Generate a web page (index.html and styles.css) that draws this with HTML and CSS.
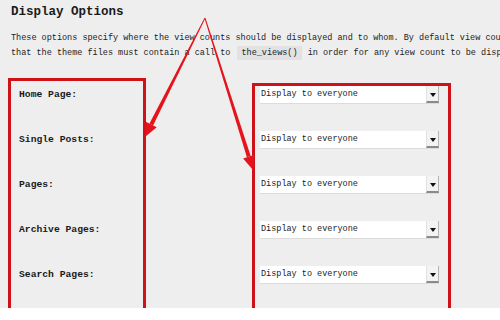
FILE: index.html
```html
<!DOCTYPE html>
<html lang="en">

<head>
    <meta charset="UTF-8">
    <meta name="viewport" content="width=device-width, initial-scale=1.0">
    <title>Display Options</title>
    <link rel="stylesheet" href="styles.css">
</head>

<body>
    <div class="wrap">
        <h2 class="title">Display Options</h2>
        <p class="intro">These options specify where the view counts should be displayed and to whom. By default view counts will be displayed to everyone. Note<br>that the theme files must contain a call to <code>the_views()</code> in order for any view count to be displayed.</p>

        <div class="options">
            <div class="labels">
                <div class="label">Home Page:</div>
                <div class="label">Single Posts:</div>
                <div class="label">Pages:</div>
                <div class="label">Archive Pages:</div>
                <div class="label">Search Pages:</div>
            </div>
            <div class="fields">
                <div class="select"><span class="value">Display to everyone</span><span class="caret"></span></div>
                <div class="select"><span class="value">Display to everyone</span><span class="caret"></span></div>
                <div class="select"><span class="value">Display to everyone</span><span class="caret"></span></div>
                <div class="select"><span class="value">Display to everyone</span><span class="caret"></span></div>
                <div class="select"><span class="value">Display to everyone</span><span class="caret"></span></div>
            </div>
        </div>

        <!-- annotation arrows -->
        <svg class="arrows" width="500" height="308" viewBox="0 0 500 308">
            <polygon fill="#e5141c" points="204.6,17.8 205.4,18.2 153.1,125.4 149.5,123.6" />
            <polygon fill="#e5141c" points="145,137 145.9,121.8 156.7,127.2" />
            <polygon fill="#e5141c" points="204.5,18.2 205.5,17.9 250.7,156.0 246.9,157.2" />
            <polygon fill="#e5141c" points="253,170 243.1,158.4 254.5,154.8" />
        </svg>
    </div>
</body>

</html>
```

FILE: styles.css
```css
* {
    box-sizing: border-box;
    margin: 0;
    padding: 0;
}

body {
    background: #ffffff;
    overflow: hidden;
    font-family: "Liberation Mono", "DejaVu Sans Mono", monospace;
    color: #222;
}

.wrap {
    position: relative;
    height: 308px;
    background: #eeeeee;
    overflow: hidden;
}

.title {
    font-size: 12.5px;
    font-weight: 700;
    line-height: 15px;
    color: #1a1a1a;
    margin: 5px 0 0 11px;
}

.intro {
    font-size: 8.5px;
    line-height: 15px;
    white-space: nowrap;
    margin: 11px 0 0 11px;
}

.intro code {
    font-family: "Liberation Mono", monospace;
    font-size: 8.5px;
    background: #e2e2e2;
    padding: 2px 4px;
    margin: 0 1px 0 2px;
}

.options {
    display: flex;
    align-items: flex-start;
}

.labels {
    width: 138px;
    height: 240px;
    margin: 17px 0 0 8px;
    padding: 6px 0 0 8px;
    border: 3px solid #cf1119;
}

.label {
    height: 45px;
    line-height: 15px;
    font-size: 9.7px;
    font-weight: 700;
    color: #1a1a1a;
}

.fields {
    width: 199px;
    height: 240px;
    margin: 22px 0 0 106px;
    padding: 0 0 0 5px;
    border: 3px solid #cf1119;
}

.select {
    display: flex;
    align-items: stretch;
    width: 179px;
    height: 18px;
    margin-bottom: 27px;
    background: #ffffff;
    border-bottom: 1px solid #dcdcdc;
}

.value {
    flex: 1;
    font-size: 8.5px;
    line-height: 17px;
    padding-left: 1px;
    color: #1a1a1a;
}

.caret {
    position: relative;
    width: 13px;
    background: #f3f3f3;
    border-left: 1px solid #e2e2e2;
    border-right: 1px solid #b5b5b5;
    border-bottom: 2px solid #8a8a8a;
}

.caret::after {
    content: "";
    position: absolute;
    left: 3px;
    top: 7px;
    border-left: 3px solid transparent;
    border-right: 3px solid transparent;
    border-top: 4px solid #111;
}

.arrows {
    position: absolute;
    left: 0;
    top: 0;
    pointer-events: none;
}
```
